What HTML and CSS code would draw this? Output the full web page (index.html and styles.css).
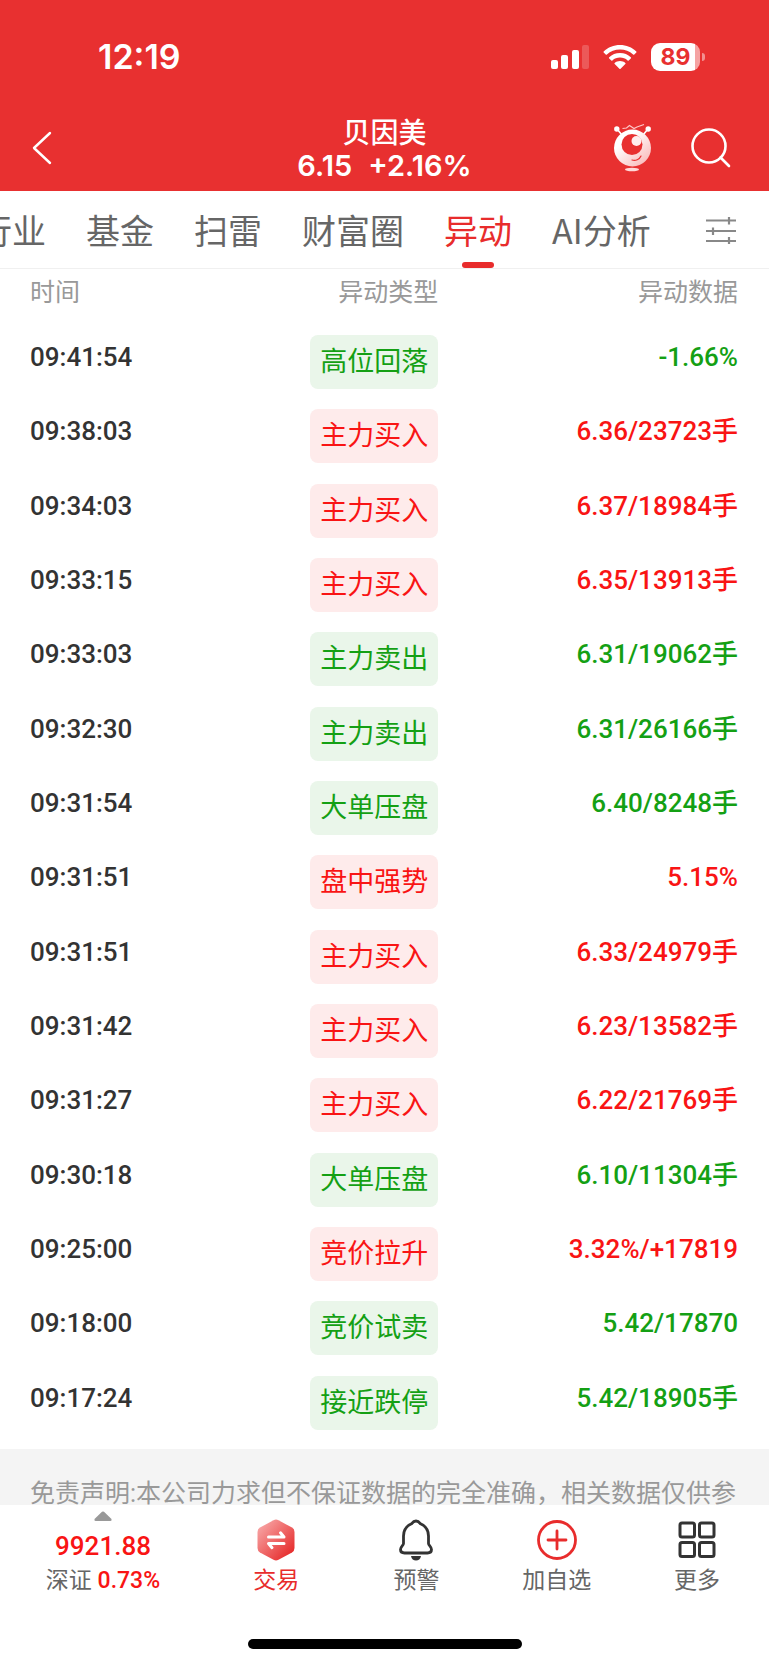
FILE: index.html
```
<!DOCTYPE html>
<html lang="zh-CN">
<head>
  <meta charset="UTF-8">
  <meta name="viewport" content="width=device-width, initial-scale=1">
  <title>贝因美 - 异动</title>
  <link rel="stylesheet" href="styles.css">
</head>
<body>
  <header class="header">
    <div class="status-bar">
      <span class="clock">12:19</span>
      <div class="status-icons">
        <svg width="38" height="24" viewBox="0 0 38 24" fill="#fff">
          <rect x="0" y="15" width="7" height="9" rx="2"/>
          <rect x="10" y="10" width="7" height="14" rx="2"/>
          <rect x="21" y="5" width="7" height="19" rx="2"/>
          <rect x="31" y="0" width="7" height="24" rx="2" opacity="0.2"/>
        </svg>
        <svg width="34" height="24" viewBox="0 0 34 24" fill="#fff">
          <path d="M17 0C23.300 0 29 2.400 33.300 6.400Q33.900 7 33.300 7.600L31.300 9.600Q30.700 10.100 30.100 9.600C26.600 6.400 22 4.600 17 4.600S7.400 6.400 3.900 9.600Q3.300 10.100 2.700 9.600L.7 7.600Q.1 7 .7 6.400C5 2.400 10.700 0 17 0Z"/>
          <path d="M17 8C21.200 8 25 9.600 27.800 12.200Q28.400 12.800 27.800 13.400L25.700 15.400Q25.200 15.900 24.600 15.400C22.500 13.600 19.900 12.600 17 12.600S11.500 13.600 9.400 15.400Q8.800 15.900 8.300 15.400L6.200 13.400Q5.600 12.800 6.200 12.200C9 9.600 12.800 8 17 8Z"/>
          <path d="M17 16C19 16 20.900 16.700 22.300 17.900Q22.900 18.500 22.300 19.100L17.600 23.700Q17 24.300 16.400 23.700L11.700 19.100Q11.100 18.500 11.700 17.900C13.100 16.700 15 16 17 16Z"/>
        </svg>
        <div class="battery"><span class="battery-level">89</span></div>
      </div>
    </div>
    <div class="title-bar">
      <button class="icon-btn" type="button" aria-label="返回">
        <svg width="20" height="34" viewBox="0 0 20 34" fill="none" stroke="#fff" stroke-width="2.4" stroke-linecap="round" stroke-linejoin="round">
          <path d="M18 2L2 17l16 15"/>
        </svg>
      </button>
      <div class="stock">
        <h1 class="stock-name">贝因美</h1>
        <p class="stock-price"><span>6.15</span><span>+2.16%</span></p>
      </div>
      <div class="actions">
        <button class="icon-btn" type="button" aria-label="智能助手">
          <svg width="40" height="48" viewBox="0 0 40 48" fill="none">
            <defs>
              <linearGradient id="mascot" x1="0.3" y1="0.3" x2="0.9" y2="1">
                <stop offset="0" stop-color="#fff"/>
                <stop offset="1" stop-color="#f9b4b4"/>
              </linearGradient>
            </defs>
            <path d="M4 5l5 6M35 5l-5 6" stroke="#fff" stroke-width="1.600"/>
            <circle cx="3.800" cy="5" r="2.700" fill="#fff"/>
            <circle cx="35.200" cy="5" r="2.700" fill="#fff"/>
            <path d="M9.500 4.500l4-.5 3-2.500 4.500 3 3-1.500 7-2.500" stroke="#ffc9c9" stroke-width="1.100"/>
            <circle cx="19.500" cy="24" r="18.500" fill="url(#mascot)"/>
            <circle cx="19" cy="20.500" r="10.500" fill="#e83030"/>
            <circle cx="23.500" cy="17" r="5" fill="#ffeded"/>
            <path d="M19 36c3.500 1 7.500-.5 9-4" stroke="#e83030" stroke-width="1.200" stroke-linecap="round"/>
            <ellipse cx="19" cy="45.500" rx="7" ry="1.700" fill="#ffd9d9"/>
          </svg>
        </button>
        <button class="icon-btn" type="button" aria-label="搜索">
          <svg width="40" height="40" viewBox="0 0 40 40" fill="none" stroke="#fff" stroke-width="2.600" stroke-linecap="round">
            <circle cx="18" cy="18" r="16.500"/>
            <path d="M29.500 29.500l8.500 8.500"/>
          </svg>
        </button>
      </div>
    </div>
  </header>

  <nav class="tabs">
    <div class="tab-list">
      <a class="tab" href="#">行业</a>
      <a class="tab" href="#">基金</a>
      <a class="tab" href="#">扫雷</a>
      <a class="tab" href="#">财富圈</a>
      <a class="tab active" href="#">异动</a>
      <a class="tab" href="#">AI分析</a>
    </div>
    <button class="icon-btn" type="button" aria-label="设置">
      <svg width="30" height="28" viewBox="0 0 30 28" fill="none" stroke="#888" stroke-width="2.200">
        <path d="M0 4.500h30M0 15h30M0 25h30M23 1v7.500M7 11.500v7.500M23 21v7"/>
      </svg>
    </button>
  </nav>

  <main class="content">
    <table class="moves">
      <thead>
        <tr><th>时间</th><th>异动类型</th><th>异动数据</th></tr>
      </thead>
      <tbody>
        <tr class="down"><td>09:41:54</td><td><span class="tag">高位回落</span></td><td>-1.66%</td></tr>
        <tr class="up"><td>09:38:03</td><td><span class="tag">主力买入</span></td><td>6.36/23723手</td></tr>
        <tr class="up"><td>09:34:03</td><td><span class="tag">主力买入</span></td><td>6.37/18984手</td></tr>
        <tr class="up"><td>09:33:15</td><td><span class="tag">主力买入</span></td><td>6.35/13913手</td></tr>
        <tr class="down"><td>09:33:03</td><td><span class="tag">主力卖出</span></td><td>6.31/19062手</td></tr>
        <tr class="down"><td>09:32:30</td><td><span class="tag">主力卖出</span></td><td>6.31/26166手</td></tr>
        <tr class="down"><td>09:31:54</td><td><span class="tag">大单压盘</span></td><td>6.40/8248手</td></tr>
        <tr class="up"><td>09:31:51</td><td><span class="tag">盘中强势</span></td><td>5.15%</td></tr>
        <tr class="up"><td>09:31:51</td><td><span class="tag">主力买入</span></td><td>6.33/24979手</td></tr>
        <tr class="up"><td>09:31:42</td><td><span class="tag">主力买入</span></td><td>6.23/13582手</td></tr>
        <tr class="up"><td>09:31:27</td><td><span class="tag">主力买入</span></td><td>6.22/21769手</td></tr>
        <tr class="down"><td>09:30:18</td><td><span class="tag">大单压盘</span></td><td>6.10/11304手</td></tr>
        <tr class="up"><td>09:25:00</td><td><span class="tag">竞价拉升</span></td><td>3.32%/+17819</td></tr>
        <tr class="down"><td>09:18:00</td><td><span class="tag">竞价试卖</span></td><td>5.42/17870</td></tr>
        <tr class="down"><td>09:17:24</td><td><span class="tag">接近跌停</span></td><td>5.42/18905手</td></tr>
      </tbody>
    </table>
    <p class="disclaimer">免责声明:本公司力求但不保证数据的完全准确，相关数据仅供参</p>
  </main>

  <footer class="footer">
    <nav class="toolbar">
      <a class="index" href="#">
        <svg width="18" height="10" viewBox="0 0 18 10" fill="#999"><path d="M8 .8Q9 0 10 .8L17.500 8Q18 10 16.500 10h-15Q0 10 .5 8Z"/></svg>
        <strong class="index-value">9921.88</strong>
        <span class="index-change">深证 <b>0.73%</b></span>
      </a>
      <a class="tool trade" href="#">
        <svg width="40" height="42" viewBox="0 0 40 42">
          <defs>
            <linearGradient id="hex" x1="0" y1="0" x2="1" y2="1">
              <stop offset="0.1" stop-color="#f7a3a3"/>
              <stop offset="0.9" stop-color="#e62a2a"/>
            </linearGradient>
          </defs>
          <path d="M17.500 1.200Q20 0 22.500 1.200L36 8.600Q38.500 10 38.500 13v16Q38.500 32 36 33.400L22.500 40.800Q20 42 17.500 40.800L4 33.400Q1.500 32 1.500 29V13Q1.500 10 4 8.600Z" fill="url(#hex)"/>
          <path d="M12.500 18h15.500l-3.500-4.200M28 24.500h-15.500l3.500 4.200" fill="none" stroke="#fff" stroke-width="3" stroke-linecap="round" stroke-linejoin="round"/>
        </svg>
        交易
      </a>
      <a class="tool" href="#">
        <svg width="40" height="42" viewBox="0 0 40 42" fill="none" stroke="#333" stroke-width="2.800" stroke-linejoin="round">
          <path d="M20 2C17.500 2 16.500 3.500 15.500 4.800C10.500 7 7.500 11 7.500 17v7.500C7.500 26.500 4.500 27.500 4.500 30.500C4.500 33 6 34 8.500 34h23c2.500 0 4-1 4-3.500C35.500 27.500 32.500 26.500 32.500 24.500V17c0-6-3-10-8-12.200C23.500 3.500 22.500 2 20 2Z"/>
          <path d="M15 37h10c-.5 3-2.500 4.500-5 4.500S15.500 40 15 37Z" fill="#333" stroke="none"/>
        </svg>
        预警
      </a>
      <a class="tool" href="#">
        <svg width="40" height="42" viewBox="0 0 40 42" fill="none" stroke="#e82c2c" stroke-width="2.800" stroke-linecap="round">
          <circle cx="20" cy="21" r="18.500"/>
          <path d="M11 21h18M20 12v18"/>
        </svg>
        加自选
      </a>
      <a class="tool" href="#">
        <svg width="40" height="42" viewBox="0 0 40 42" fill="none" stroke="#333" stroke-width="3">
          <rect x="3" y="4" width="14.500" height="14" rx="2"/>
          <rect x="22.500" y="4" width="14.500" height="14" rx="2"/>
          <rect x="3" y="23.500" width="14.500" height="14" rx="2"/>
          <rect x="22.500" y="23.500" width="14.500" height="14" rx="2"/>
        </svg>
        更多
      </a>
    </nav>
    <div class="home-indicator"></div>
  </footer>
</body>
</html>
```
FILE: styles.css
```
* {
  margin: 0;
  padding: 0;
  box-sizing: border-box;
}

body {
  min-height: 100vh;
  display: flex;
  flex-direction: column;
  background: #fff;
  color: #333;
  font-family: Roboto, 'Noto Sans CJK SC', sans-serif;
  overflow-x: hidden;
}

a {
  color: inherit;
  text-decoration: none;
}

svg {
  display: block;
  flex-shrink: 0;
}

.icon-btn {
  border: none;
  background: none;
  cursor: pointer;
}

.header {
  background: #e83030;
  color: #fff;
  font-family: Inter, 'Noto Sans CJK SC', sans-serif;
}

.status-bar {
  display: flex;
  justify-content: space-between;
  align-items: center;
  padding: 37px 64px 0 98px;
}

.clock {
  font-size: 34px;
  line-height: 40px;
  font-weight: 600;
}

.status-icons {
  display: flex;
  align-items: center;
  gap: 14px;
}

.battery {
  position: relative;
  width: 49px;
  height: 28px;
  margin-right: 5px;
  border-radius: 9px;
  background: linear-gradient(90deg, #fff 89%, #f5a3a3 89%);
  text-align: center;
}

.battery::after {
  content: '';
  position: absolute;
  left: 51px;
  top: 10px;
  width: 3px;
  height: 8px;
  border-radius: 0 4px 4px 0;
  background: #f29090;
}

.battery-level {
  color: #e83030;
  font-size: 23px;
  line-height: 28px;
  font-weight: 700;
}

.title-bar {
  display: grid;
  grid-template-columns: 1fr auto 1fr;
  align-items: center;
  padding: 38px 32px 10px;
}

.stock {
  text-align: center;
}

.stock-name {
  font-size: 28px;
  line-height: 36px;
  font-weight: 500;
}

.stock-price {
  display: flex;
  gap: 16px;
  font-size: 29px;
  line-height: 30px;
  font-weight: 600;
}

.title-bar > .icon-btn {
  justify-self: start;
}

.actions {
  display: flex;
  justify-content: flex-end;
  align-items: center;
  gap: 38px;
  padding-right: 6px;
}

.tabs {
  display: flex;
  justify-content: space-between;
  align-items: center;
  height: 78px;
  padding-right: 33px;
  border-bottom: 1px solid #f0f0f0;
  overflow: hidden;
}

.tab-list {
  display: flex;
  gap: 40px;
  margin-left: -22px;
}

.tab {
  position: relative;
  color: #666;
  font-family: 'Noto Sans CJK SC', sans-serif;
  font-size: 34px;
  line-height: 76px;
  white-space: nowrap;
}

.tab.active {
  color: #e82c2c;
}

.tab.active::after {
  content: '';
  position: absolute;
  left: 50%;
  bottom: 0;
  width: 32px;
  height: 6px;
  margin-left: -16px;
  border-radius: 3px;
  background: #e82c2c;
}

.content {
  flex: 1;
  display: flex;
  flex-direction: column;
}

.moves {
  flex: 1;
  width: 100%;
  margin-bottom: 9px;
  border-collapse: collapse;
  table-layout: fixed;
}

.moves th {
  height: 56px;
  padding-bottom: 8px;
  color: #999;
  font-size: 25px;
  line-height: 36px;
  font-weight: 400;
}

.moves td {
  height: 74px;
  padding-bottom: 10px;
  font-size: 26px;
  line-height: 30px;
  font-weight: 500;
  vertical-align: middle;
}

.moves tr > :first-child {
  padding-left: 30px;
  text-align: left;
}

.moves tr > :nth-child(2) {
  text-align: right;
}

.moves td:nth-child(2) {
  padding-bottom: 0;
}

.moves tr > :last-child {
  width: 43%;
  padding-right: 31px;
  text-align: right;
}

.tag {
  display: inline-block;
  padding: 9px 10px;
  border-radius: 8px;
  font-size: 27px;
  line-height: 36px;
  font-weight: 400;
}

.up td:last-child,
.up .tag {
  color: #f91414;
}

.down td:last-child,
.down .tag {
  color: #14a014;
}

.up .tag {
  background: #feebeb;
}

.down .tag {
  background: #eaf6ea;
}

.disclaimer {
  height: 56px;
  padding: 27px 30px 0;
  background: #f4f4f4;
  color: #999;
  font-size: 25px;
  line-height: 36px;
  white-space: nowrap;
  overflow: hidden;
}

.footer {
  background: #fff;
}

.toolbar {
  display: grid;
  grid-template-columns: 206px repeat(4, 1fr);
  padding: 6px 2px 0 0;
}

.index,
.tool {
  display: flex;
  flex-direction: column;
  align-items: center;
}

.index-value {
  margin-top: 8px;
  color: #f91414;
  font-size: 26px;
  line-height: 34px;
  font-weight: 500;
}

.index-change {
  color: #666;
  font-size: 23px;
  line-height: 36px;
}

.index-change b {
  color: #f91414;
  font-weight: 500;
}

.tool {
  gap: 2px;
  padding-top: 8px;
  color: #666;
  font-size: 23px;
  line-height: 36px;
}

.trade {
  color: #e82c2c;
}

.home-indicator {
  width: 274px;
  height: 10px;
  margin: 40px auto 16px;
  border-radius: 5px;
  background: #000;
}
```
